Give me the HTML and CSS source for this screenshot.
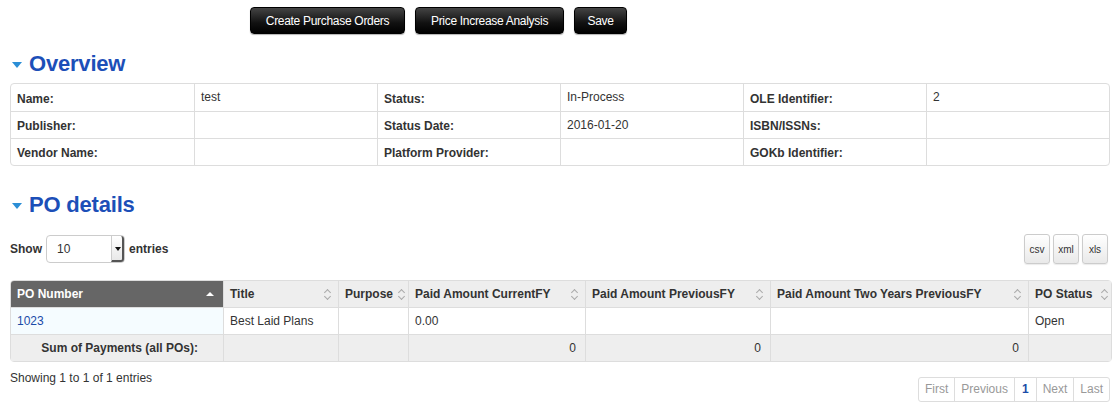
FILE: index.html
```html
<!DOCTYPE html>
<html>
<head>
<meta charset="utf-8">
<link rel="stylesheet" href="styles.css">
</head>
<body>
<div class="page">
  <div class="toolbar">
    <button class="btn-dark">Create Purchase Orders</button>
    <button class="btn-dark">Price Increase Analysis</button>
    <button class="btn-dark">Save</button>
  </div>

  <h2 class="section-title"><span class="caret"></span>Overview</h2>
  <table class="overview">
    <tr>
      <th>Name:</th><td>test</td>
      <th>Status:</th><td>In-Process</td>
      <th>OLE Identifier:</th><td>2</td>
    </tr>
    <tr>
      <th>Publisher:</th><td></td>
      <th>Status Date:</th><td>2016-01-20</td>
      <th>ISBN/ISSNs:</th><td></td>
    </tr>
    <tr>
      <th>Vendor Name:</th><td></td>
      <th>Platform Provider:</th><td></td>
      <th>GOKb Identifier:</th><td></td>
    </tr>
  </table>

  <h2 class="section-title second"><span class="caret"></span>PO details</h2>

  <div class="controls">
    <div class="length">
      <span class="lbl">Show</span>
      <div class="select"><span class="val">10</span><span class="arrow"></span></div>
      <span class="lbl">entries</span>
    </div>
    <div class="exports">
      <button class="btn-light">csv</button>
      <button class="btn-light">xml</button>
      <button class="btn-light">xls</button>
    </div>
  </div>

  <table class="po">
    <colgroup>
      <col class="c1"><col class="c2"><col class="c3"><col class="c4"><col class="c5"><col class="c6"><col class="c7">
    </colgroup>
    <thead>
      <tr>
        <th class="sorted"><span>PO Number</span><span class="tri-up"></span></th>
        <th><span>Title</span><span class="sort"></span></th>
        <th class="tight"><span>Purpose</span><span class="sort"></span></th>
        <th><span>Paid Amount CurrentFY</span><span class="sort"></span></th>
        <th><span>Paid Amount PreviousFY</span><span class="sort"></span></th>
        <th><span>Paid Amount Two Years PreviousFY</span><span class="sort"></span></th>
        <th class="tight"><span>PO Status</span><span class="sort"></span></th>
      </tr>
    </thead>
    <tbody>
      <tr class="data">
        <td class="sorted-cell"><a href="#">1023</a></td>
        <td>Best Laid Plans</td>
        <td></td>
        <td>0.00</td>
        <td></td>
        <td></td>
        <td>Open</td>
      </tr>
      <tr class="sum">
        <td class="sum-label">Sum of Payments (all POs):</td>
        <td></td>
        <td></td>
        <td class="num">0</td>
        <td class="num">0</td>
        <td class="num">0</td>
        <td></td>
      </tr>
    </tbody>
  </table>

  <div class="footer">
    <div class="info">Showing 1 to 1 of 1 entries</div>
    <div class="pager">
      <span class="pg">First</span><span class="pg">Previous</span><span class="pg current">1</span><span class="pg">Next</span><span class="pg">Last</span>
    </div>
  </div>
</div>
</body>
</html>
```

FILE: styles.css
```css
* { box-sizing: border-box; }
html, body { margin: 0; padding: 0; background: #fff; }
body {
  font-family: "Liberation Sans", Arial, Helvetica, sans-serif;
  font-size: 12px;
  color: #333;
}
.page { padding: 7px 6px 0 10px; }

.toolbar { display: flex; gap: 10px; padding-left: 240px; }
.btn-dark {
  height: 27px;
  padding: 0;
  border: 1px solid #000;
  border-radius: 4px;
  background: linear-gradient(#444, #111 60%, #000);
  color: #fff;
  font-family: "Liberation Sans", Arial, sans-serif;
  font-size: 12px;
  letter-spacing: -0.3px;
  white-space: nowrap;
  box-shadow: 0 1px 1px rgba(0,0,0,0.3);
}
.toolbar .btn-dark:nth-child(1) { width: 155px; }
.toolbar .btn-dark:nth-child(2) { width: 149px; }
.toolbar .btn-dark:nth-child(3) { width: 53px; }

.section-title {
  display: flex;
  align-items: center;
  margin: 17px 0 0 2px;
  height: 26px;
  font-size: 22px;
  font-weight: bold;
  color: #1c4fb8;
  letter-spacing: -0.2px;
}
.section-title.second { margin-top: 26px; }
.caret {
  width: 0; height: 0;
  border-left: 5px solid transparent;
  border-right: 5px solid transparent;
  border-top: 6px solid #2b8ed6;
  margin-right: 7px;
  margin-top: 2px;
}

.overview {
  margin-top: 6px;
  width: 1100px;
  border-collapse: separate;
  border-spacing: 0;
  border: 1px solid #ddd;
  border-radius: 4px;
  table-layout: fixed;
}
.overview th, .overview td {
  height: 27px;
  padding: 0 6px;
  text-align: left;
  vertical-align: middle;
  border-left: 1px solid #ddd;
  border-top: 1px solid #ddd;
  font-size: 12px;
}
.overview tr:first-child th, .overview tr:first-child td { border-top: 0; }
.overview th:first-child { border-left: 0; }
.overview th { font-weight: bold; color: #333; padding-top: 2px; }
.overview td { padding-bottom: 1px; }

.controls {
  display: flex;
  justify-content: space-between;
  align-items: center;
  margin-top: 16px;
}
.length { display: flex; align-items: center; gap: 4px; }
.lbl { font-weight: bold; color: #333; }
.select {
  display: flex;
  justify-content: space-between;
  align-items: center;
  width: 79px;
  height: 28px;
  border: 1px solid #ccc;
  border-radius: 4px;
  padding-left: 10px;
  background: #fff;
}
.select .val { color: #333; }
.select .arrow {
  width: 13px;
  height: 26px;
  border-left: 1px solid #ccc;
  border-right: 2px solid #555;
  border-bottom: 2px solid #555;
  border-radius: 0 3px 3px 0;
  background: linear-gradient(#fff, #e8e8e8);
  position: relative;
}
.select .arrow::after {
  content: "";
  position: absolute;
  left: 3px; top: 11px;
  border-left: 3px solid transparent;
  border-right: 3px solid transparent;
  border-top: 4px solid #111;
}
.exports { display: flex; gap: 3px; margin-right: 2px; }
.btn-light {
  height: 30px;
  padding: 0 4px;
  min-width: 26px;
  border: 1px solid #ccc;
  border-radius: 3px;
  background: linear-gradient(#fff, #e9e9e9);
  color: #333;
  font-family: "Liberation Sans", Arial, sans-serif;
  font-size: 10px;
  box-shadow: 0 1px 1px rgba(0,0,0,0.08);
}

.po {
  margin-top: 16px;
  width: 1100px;
  border-collapse: separate;
  border-spacing: 0;
  border: 1px solid #ddd;
  border-radius: 4px;
  table-layout: fixed;
}
.c1 { width: 212px; }
.c2 { width: 115px; }
.c3 { width: 70px; }
.c4 { width: 177px; }
.c5 { width: 185px; }
.c6 { width: 258px; }
.c7 { width: 83px; }
.po th, .po td {
  height: 26px;
  padding: 0 6px;
  vertical-align: middle;
  text-align: left;
  border-left: 1px solid #ddd;
  font-size: 12px;
}
.po th:first-child, .po td:first-child { border-left: 0; }
.po td { border-top: 1px solid #ddd; height: 27px; }
.po th {
  background: #eee;
  font-weight: bold;
  color: #333;
  white-space: nowrap;
}
.po th span:first-child { display: inline-block; }
.po th { position: relative; padding-right: 16px; }
.po th.tight { padding-right: 12px; }
.po th.sorted { background: #666; color: #fff; border-radius: 3px 0 0 0; }
.tri-up {
  position: absolute;
  right: 9px; top: 11px;
  border-left: 4px solid transparent;
  border-right: 4px solid transparent;
  border-bottom: 4px solid #fff;
}
.sort {
  position: absolute;
  right: 7px; top: 8px;
  width: 7px; height: 11px;
}
.sort::before, .sort::after {
  content: "";
  position: absolute;
  left: 1px;
  width: 4px; height: 4px;
  border-left: 1px solid #aaa;
  border-top: 1px solid #aaa;
}
.sort::before { top: 1px; transform: rotate(45deg); }
.sort::after { top: 5px; transform: rotate(225deg); }
.po th.tight .sort { right: 3px; }

.sorted-cell { background: #f5fcff; }
.po a { color: #1a4ba8; text-decoration: none; }
.sum td { background: #eee; }
.sum-label { text-align: right !important; font-weight: bold; padding-right: 25px !important; }
.num { text-align: right !important; padding-right: 9px !important; }

.footer {
  display: flex;
  justify-content: space-between;
  align-items: flex-start;
  margin-top: 4px;
}
.info { margin-top: 5px; color: #333; }
.pager {
  display: flex;
  margin-top: 11px;
  margin-right: 0;
  border: 1px solid #ddd;
  border-radius: 3px;
}
.pg {
  height: 23px;
  line-height: 22px;
  padding: 0 6px;
  color: #999;
  border-left: 1px solid #ddd;
  font-size: 12px;
}
.pg:first-child { border-left: 0; }
.pg.current { color: #1a4ba8; font-weight: bold; padding: 0 7px; }
```
